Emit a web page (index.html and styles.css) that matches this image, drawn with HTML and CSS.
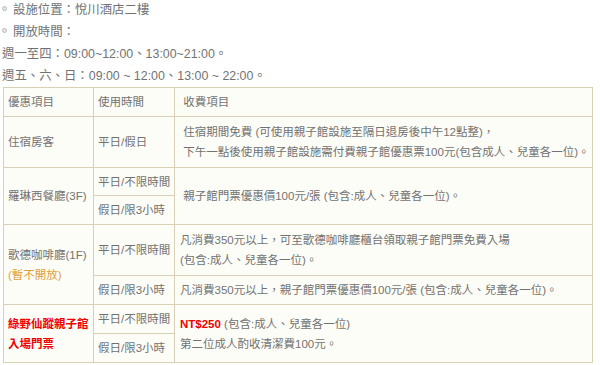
FILE: index.html
```html
<!DOCTYPE html>
<html lang="zh-Hant">
<head>
<meta charset="utf-8">
<title>親子館</title>
<link rel="stylesheet" href="styles.css">
</head>
<body>
<div class="page">
  <div class="info">
    <p class="line"><span class="dot"></span>設施位置：悅川酒店二樓</p>
    <p class="line"><span class="dot"></span>開放時間：</p>
    <p class="line">週一至四：09:00~12:00、13:00~21:00。</p>
    <p class="line">週五、六、日：09:00 ~ 12:00、13:00 ~ 22:00。</p>
  </div>
  <table class="fees">
    <colgroup>
      <col class="c1">
      <col class="c2">
      <col class="c3">
    </colgroup>
    <tr class="r-head">
      <td>優惠項目</td>
      <td>使用時間</td>
      <td class="desc">&nbsp;收費項目</td>
    </tr>
    <tr class="r-tall">
      <td>住宿房客</td>
      <td>平日/假日</td>
      <td class="desc">&nbsp;住宿期間免費 (可使用親子館設施至隔日退房後中午12點整)，<br>&nbsp;下午一點後使用親子館設施需付費親子館優惠票100元(包含成人、兒童各一位)。</td>
    </tr>
    <tr class="r-a">
      <td rowspan="2">羅琳西餐廳(3F)</td>
      <td>平日/不限時間</td>
      <td class="desc" rowspan="2">&nbsp;親子館門票優惠價100元/張 (包含:成人、兒童各一位)。</td>
    </tr>
    <tr class="r-b">
      <td>假日/限3小時</td>
    </tr>
    <tr class="r-tall">
      <td rowspan="2">歌德咖啡廳(1F)<br><span class="closed">(暫不開放)</span></td>
      <td>平日/不限時間</td>
      <td class="desc">凡消費350元以上，可至歌德咖啡廳櫃台領取親子館門票免費入場<br>(包含:成人、兒童各一位)。</td>
    </tr>
    <tr class="r-b">
      <td>假日/限3小時</td>
      <td class="desc">凡消費350元以上，親子館門票優惠價100元/張 (包含:成人、兒童各一位)。</td>
    </tr>
    <tr class="r-b">
      <td rowspan="2" class="hot">綠野仙蹤親子館<br>入場門票</td>
      <td>平日/不限時間</td>
      <td class="desc" rowspan="2"><span class="price">NT$250</span> (包含:成人、兒童各一位)<br>第二位成人酌收清潔費100元。</td>
    </tr>
    <tr class="r-b">
      <td>假日/限3小時</td>
    </tr>
  </table>
</div>
</body>
</html>
```

FILE: styles.css
```css
html, body {
  margin: 0;
  padding: 0;
  background: #ffffff;
}

body {
  font-family: "Liberation Sans", Arial, "Noto Sans CJK TC", sans-serif;
  font-size: 12px;
  color: #727272;
}

.page {
  padding: 0 0 0 2px;
}

.info {
  margin-top: -1px;
  font-size: 12.4px;
}

.line {
  margin: 0;
  line-height: 22px;
  white-space: nowrap;
}

.dot {
  display: inline-block;
  width: 3px;
  height: 3px;
  border: 1px solid #b8b8b8;
  background: #e8e8e8;
  border-radius: 50%;
  margin: 0 6px 0 0;
  vertical-align: 3px;
}

.fees {
  margin-left: 1px;
  width: 589px;
  border-collapse: collapse;
  table-layout: fixed;
  background: #fdfdf8;
  font-size: 11.5px;
  line-height: 20px;
}

.c1 { width: 90px; }
.c2 { width: 81px; }
.c3 { width: 418px; }

.fees td {
  border: 1px solid #d9d1b6;
  padding: 0 4px;
  vertical-align: middle;
  white-space: nowrap;
  overflow: hidden;
}

.fees td.desc {
  padding-left: 5px;
}

.r-head td { height: 28px; }
.r-tall td { height: 50px; }
.r-a td { height: 27px; }
.r-b td { height: 28px; }

.closed {
  color: #e09d3a;
}

.hot {
  color: #f00000;
  font-weight: bold;
}

.price {
  color: #f00000;
  font-weight: bold;
}
```
